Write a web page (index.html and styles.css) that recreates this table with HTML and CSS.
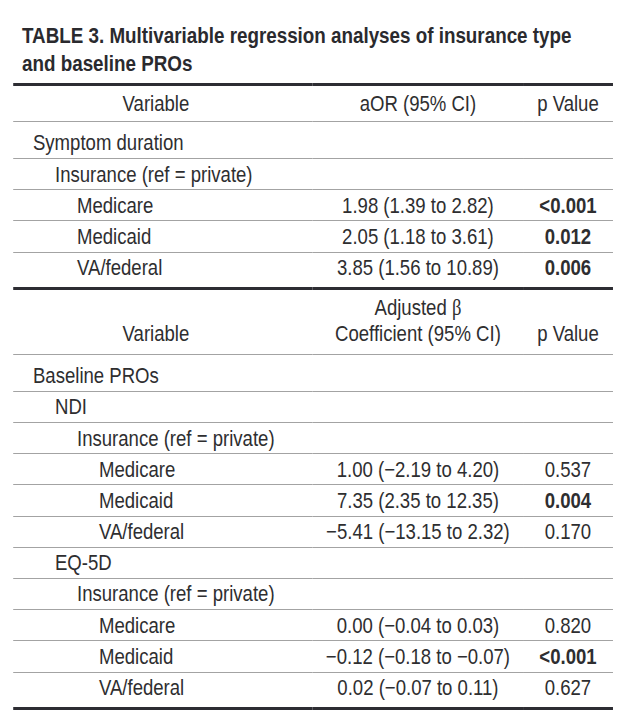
FILE: index.html
```html
<!DOCTYPE html>
<html lang="en">
<head>
<meta charset="utf-8">
<title>Table 3</title>
<link rel="stylesheet" href="styles.css">
</head>
<body>
<div class="viewport">
<div class="page">
  <h1 class="title">TABLE 3. Multivariable regression analyses of insurance type and baseline PROs</h1>
  <table class="tbl">
    <colgroup>
      <col class="c1">
      <col class="c2">
      <col class="c3">
    </colgroup>
    <thead>
      <tr class="head">
        <th class="hvar">Variable</th>
        <th>aOR (95% CI)</th>
        <th>p Value</th>
      </tr>
    </thead>
    <tbody>
      <tr class="top"><td class="l0">Symptom duration</td><td></td><td></td></tr>
      <tr><td class="l1">Insurance (ref = private)</td><td></td><td></td></tr>
      <tr><td class="l2">Medicare</td><td class="num">1.98 (1.39 to 2.82)</td><td class="num b">&lt;0.001</td></tr>
      <tr><td class="l2">Medicaid</td><td class="num">2.05 (1.18 to 3.61)</td><td class="num b">0.012</td></tr>
      <tr class="last"><td class="l2">VA/federal</td><td class="num">3.85 (1.56 to 10.89)</td><td class="num b">0.006</td></tr>
      <tr class="head head2">
        <th class="hvar">Variable</th>
        <th>Adjusted <span class="beta">β</span><br>Coefficient (95% CI)</th>
        <th>p Value</th>
      </tr>
      <tr class="top"><td class="l0">Baseline PROs</td><td></td><td></td></tr>
      <tr><td class="l1">NDI</td><td></td><td></td></tr>
      <tr><td class="l2">Insurance (ref = private)</td><td></td><td></td></tr>
      <tr><td class="l3">Medicare</td><td class="num">1.00 (−2.19 to 4.20)</td><td class="num">0.537</td></tr>
      <tr><td class="l3">Medicaid</td><td class="num">7.35 (2.35 to 12.35)</td><td class="num b">0.004</td></tr>
      <tr><td class="l3">VA/federal</td><td class="num">−5.41 (−13.15 to 2.32)</td><td class="num">0.170</td></tr>
      <tr><td class="l1">EQ-5D</td><td></td><td></td></tr>
      <tr><td class="l2">Insurance (ref = private)</td><td></td><td></td></tr>
      <tr><td class="l3">Medicare</td><td class="num">0.00 (−0.04 to 0.03)</td><td class="num">0.820</td></tr>
      <tr><td class="l3">Medicaid</td><td class="num">−0.12 (−0.18 to −0.07)</td><td class="num b">&lt;0.001</td></tr>
      <tr class="last final"><td class="l3">VA/federal</td><td class="num">0.02 (−0.07 to 0.11)</td><td class="num">0.627</td></tr>
    </tbody>
  </table>
</div>
</div>
</body>
</html>
```

FILE: styles.css
```css
/* The reference uses a narrow grotesque (Arial Narrow style).
   It is emulated by laying the page out in Liberation Sans at a
   wider width and compressing it horizontally by 0.825. */

html, body {
  margin: 0;
  padding: 0;
  background: #ffffff;
  overflow: hidden;
}

body {
  font-family: "Liberation Sans", Arial, sans-serif;
  color: #2e2e30;
}

.viewport {
  width: 630px;
  height: 715px;
  overflow: hidden;
}

.page {
  width: 764px;
  padding-top: 21px;
  transform: scaleX(0.825);
  transform-origin: 0 0;
}

.title {
  margin: 0 0 0 26.7px;
  width: 690px;
  font-size: 22.8px;
  line-height: 28px;
  font-weight: bold;
  color: #2a2a2e;
}

.tbl {
  margin: 6px 0 0 15.76px;
  width: 727.3px;
  border-collapse: collapse;
  table-layout: fixed;
  font-size: 22.5px;
}

.c1 { width: 363.6px; }
.c2 { width: 254.5px; }
.c3 { width: 109.2px; }

.tbl th,
.tbl td {
  padding: 5.5px 9px 5.7px;
  line-height: 19px;
  border-bottom: 1px solid #a3a3a3;
  white-space: nowrap;
}

.tbl th {
  font-weight: normal;
  text-align: center;
  vertical-align: bottom;
}

.head th {
  border-top: 3px solid #2d2d33;
  padding-top: 8px;
  padding-bottom: 8px;
}

.head .hvar {
  padding-right: 26px;
}

.head2 th {
  line-height: 26px;
  padding-top: 5.5px;
  padding-bottom: 6.5px;
}

.beta {
  font-family: "Liberation Serif", serif;
}

.top td {
  padding-top: 11px;
  padding-bottom: 6px;
}

.last td {
  padding-bottom: 9.8px;
}

.num {
  text-align: center;
}

.b {
  font-weight: bold;
}

.l0 { padding-left: 24.2px !important; }
.l1 { padding-left: 50.9px !important; }
.l2 { padding-left: 77.6px !important; }
.l3 { padding-left: 104.2px !important; }

.final td {
  border-bottom: 3px solid #2d2d33;
}
```
